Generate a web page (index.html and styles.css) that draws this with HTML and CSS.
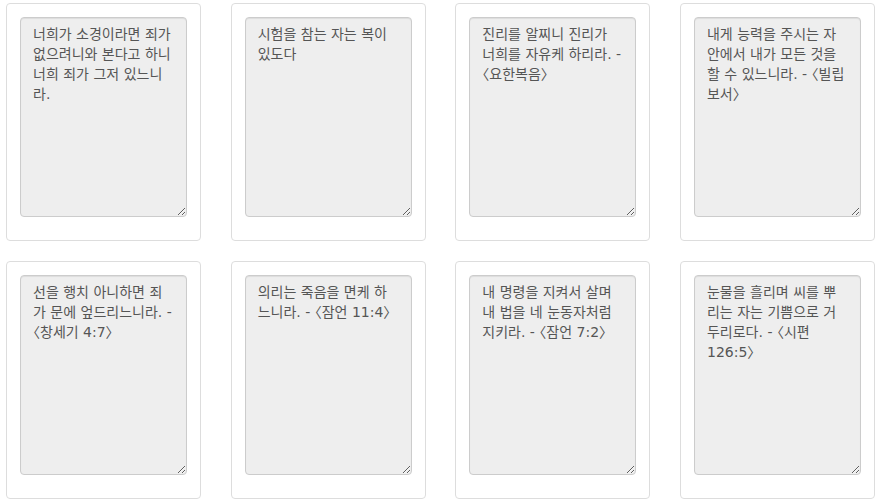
FILE: index.html
```html
<!DOCTYPE html>
<html lang="ko">
<head>
  <meta charset="UTF-8">
  <title>말씀 카드</title>
  <link rel="stylesheet" href="styles.css">
</head>
<body>
  <div class="board">
    <div class="card">
      <textarea class="verse" readonly>너희가 소경이라면 죄가 없으려니와 본다고 하니 너희 죄가 그저 있느니라.</textarea>
    </div>
    <div class="card">
      <textarea class="verse" readonly>시험을 참는 자는 복이 있도다</textarea>
    </div>
    <div class="card">
      <textarea class="verse" readonly>진리를 알찌니 진리가 너희를 자유케 하리라. - 〈요한복음〉</textarea>
    </div>
    <div class="card">
      <textarea class="verse" readonly>내게 능력을 주시는 자 안에서 내가 모든 것을 할 수 있느니라. - 〈빌립보서〉</textarea>
    </div>
    <div class="card">
      <textarea class="verse" readonly>선을 행치 아니하면 죄가 문에 엎드리느니라. - 〈창세기 4:7〉</textarea>
    </div>
    <div class="card">
      <textarea class="verse" readonly>의리는 죽음을 면케 하느니라. - 〈잠언 11:4〉</textarea>
    </div>
    <div class="card">
      <textarea class="verse" readonly>내 명령을 지켜서 살며 내 법을 네 눈동자처럼 지키라. - 〈잠언 7:2〉</textarea>
    </div>
    <div class="card">
      <textarea class="verse" readonly>눈물을 흘리며 씨를 뿌리는 자는 기쁨으로 거두리로다. - 〈시편 126:5〉</textarea>
    </div>
  </div>
</body>
</html>
```

FILE: styles.css
```css
body {
  margin: 0;
  background: #fff;
  font-family: "DejaVu Sans", "Noto Sans CJK KR", sans-serif;
}
.board {
  display: grid;
  grid-template-columns: repeat(4, 195px);
  column-gap: 29.67px;
  row-gap: 20px;
  padding: 3px 0 0 6px;
}
.card {
  border: 1px solid #ddd;
  border-radius: 4px;
  padding: 13px;
  background: #fff;
}
.verse {
  display: block;
  box-sizing: border-box;
  width: 100%;
  height: 200px;
  margin: 0 0 10px;
  padding: 6px 12.5px 6px 12px;
  border: 1px solid #ccc;
  border-radius: 4px;
  background-color: #eee;
  box-shadow: inset 0 1px 1px rgba(0, 0, 0, .075);
  color: #555;
  font-family: "DejaVu Sans", "Noto Sans CJK KR", sans-serif;
  font-size: 14px;
  font-feature-settings: "halt" 1;
  line-height: 20px;
  outline: none;
}
```
